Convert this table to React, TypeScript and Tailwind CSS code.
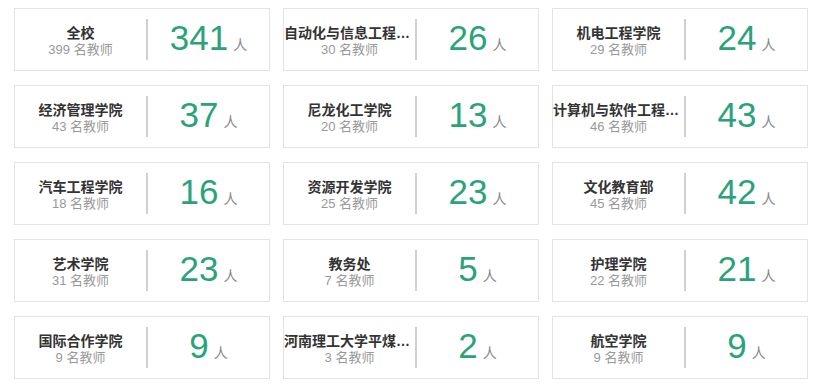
import React from "react";

const data: [string, number, number][] = [
  ["全校", 399, 341],
  ["自动化与信息工程学院", 30, 26],
  ["机电工程学院", 29, 24],
  ["经济管理学院", 43, 37],
  ["尼龙化工学院", 20, 13],
  ["计算机与软件工程学院", 46, 43],
  ["汽车工程学院", 18, 16],
  ["资源开发学院", 25, 23],
  ["文化教育部", 45, 42],
  ["艺术学院", 31, 23],
  ["教务处", 7, 5],
  ["护理学院", 22, 21],
  ["国际合作学院", 9, 9],
  ["河南理工大学平煤神马学院", 3, 2],
  ["航空学院", 9, 9],
];

export default function App() {
  return (
    <div
      className="w-[827px] h-[390px] bg-white pl-[14px] pt-[8px]"
      style={{ fontFamily: '"Liberation Sans", "Noto Sans CJK SC", sans-serif' }}
    >
      <div className="grid grid-cols-[256px_256px_256px] gap-x-[13px] gap-y-[14px]">
        {data.map(([name, teachers, count]) => (
          <div
            key={name}
            className="h-[63px] border border-[#e3e3e3] bg-white flex items-center"
          >
            <div className="w-[131px] flex flex-col items-center justify-center pt-[2px]">
              <div className="w-full truncate text-center text-[14px] leading-[18px] font-bold text-[#333]">
                {name}
              </div>
              <div className="text-[13px] leading-[16px] text-[#999]">
                {teachers} 名教师
              </div>
            </div>
            <div className="w-[2px] h-[41px] bg-[#d0d0d0]" />
            <div className="flex-1 flex items-baseline justify-center pb-[4px]">
              <span className="text-[35px] leading-none text-[#2ba37a]">{count}</span>
              <span className="ml-[5px] text-[14px] text-[#888]">人</span>
            </div>
          </div>
        ))}
      </div>
    </div>
  );
}
